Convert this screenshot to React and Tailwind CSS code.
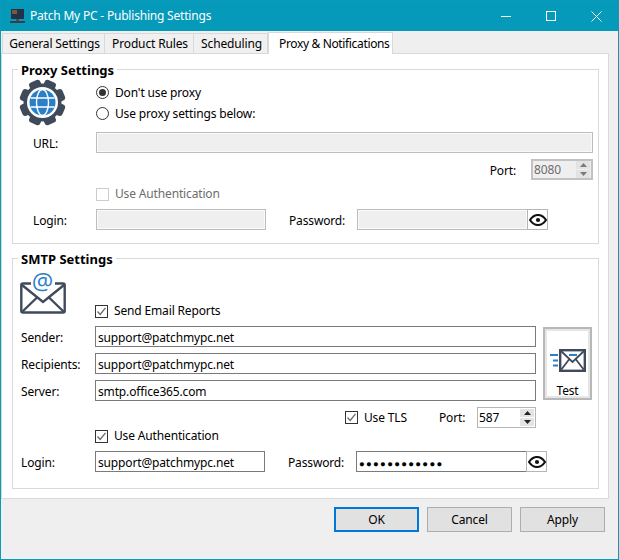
import React from "react";

const FONT = "font-['Open_Sans','Noto_Sans',sans-serif]";

function Radio({ checked }) {
  return (
    <span className="flex h-[13px] w-[13px] shrink-0 items-center justify-center rounded-full border border-[#333333] bg-white">
      {checked && <span className="h-[7px] w-[7px] rounded-full bg-[#333333]" />}
    </span>
  );
}

function Check({ checked, disabled }) {
  return (
    <span className={`flex h-[13px] w-[13px] shrink-0 items-center justify-center border ${disabled ? "border-[#cccccc]" : "border-[#333333]"} bg-white`}>
      {checked && (
        <svg width="11" height="11" viewBox="0 0 11 11" fill="none">
          <path d="M1.5 5.5 L4.2 8.5 L9.5 1.8" stroke="#6a6a6a" strokeWidth="1.3" />
        </svg>
      )}
    </span>
  );
}

function Eye() {
  return (
    <svg width="18" height="12" viewBox="0 0 18 12" fill="none">
      <path d="M1 6 C4 1.5 6.5 1 9 1 C11.5 1 14 1.5 17 6 C14 10.5 11.5 11 9 11 C6.5 11 4 10.5 1 6 Z" stroke="#111111" strokeWidth="2.1" />
      <circle cx="9" cy="6" r="2.1" fill="#111111" />
    </svg>
  );
}

function Spin({ disabled }) {
  const c = disabled ? "#7a7a7a" : "#222222";
  return (
    <span className={`flex w-[14px] flex-col gap-px ${disabled ? "bg-[#efefef]" : "bg-white"}`}>
      {[0, 1].map((i) => (
        <span key={i} className="flex h-[8px] items-center justify-center bg-[#e3e3e3]">
          <svg width="7" height="4" viewBox="0 0 7 4">
            <path d={i === 0 ? "M3.5 0 L7 4 L0 4 Z" : "M0 0 L7 0 L3.5 4 Z"} fill={c} />
          </svg>
        </span>
      ))}
    </span>
  );
}

function Field({ value, disabled, className = "" }) {
  return (
    <div className={`flex h-[21px] items-center border pl-[2px] pt-[2px] ${disabled ? "border-[#bdbdbd] bg-[#efefef] shadow-[inset_0_0_0_1px_#fafafa]" : "border-[#7a7a7a] bg-white"} ${className}`}>
      <span className="whitespace-nowrap">{value}</span>
    </div>
  );
}

function Legend({ children }) {
  return (
    <div className="-mt-[8px] ml-[5px] h-[17px] w-fit bg-white px-[3px] text-[13px] font-bold leading-[17px] tracking-normal text-black">
      {children}
    </div>
  );
}

function Gear() {
  const teeth = [0, 45, 90, 135, 180, 225, 270, 315];
  return (
    <svg width="47" height="47" viewBox="0 0 47 47">
      {teeth.map((a) => (
        <rect key={a} x="17.5" y="0.5" width="12" height="10" rx="3" fill="#3f4a5b" transform={`rotate(${a + 22.5} 23.5 23.5)`} />
      ))}
      <circle cx="23.5" cy="23.5" r="19" fill="#3f4a5b" />
      <circle cx="23.5" cy="23.5" r="15.5" fill="#ffffff" />
      <circle cx="23.5" cy="23.5" r="13" fill="#2b7fc7" />
      <ellipse cx="23.5" cy="23.5" rx="6" ry="13" fill="none" stroke="#ffffff" strokeWidth="1.4" />
      <path d="M11.5 19 H35.5 M11.5 28 H35.5" stroke="#ffffff" strokeWidth="1.4" />
    </svg>
  );
}

function Mail() {
  return (
    <svg className="overflow-visible" width="46" height="41" viewBox="0 0 46 41" fill="none">
      <path d="M11 10.5 H3 Q1.3 10.5 1.3 12 V38 Q1.3 39.5 3 39.5 H43 Q44.7 39.5 44.7 38 V12 Q44.7 10.5 43 10.5 H35" stroke="#3f4a5b" strokeWidth="2.4" />
      <path d="M2 12 L23 29 L44 12 M2 39 L17 24.5 M44 39 L29 24.5" stroke="#3f4a5b" strokeWidth="2.4" />
      <text x="22.5" y="17" textAnchor="middle" fontSize="24" fontWeight="500" fill="#2b7fc7" fontFamily="'Open Sans',sans-serif">@</text>
    </svg>
  );
}

function SendMail() {
  return (
    <svg width="37" height="23" viewBox="0 0 37 23" fill="none">
      <rect x="11.2" y="1.2" width="24.6" height="20.6" stroke="#3f4a5b" strokeWidth="2.4" />
      <path d="M12 2 L23.5 13 L35 2 M12 21 L20 10.5 M35 21 L27 10.5" stroke="#3f4a5b" strokeWidth="1.8" />
      <path d="M1 6 H9 M4 11.5 H9 M4 16.5 H9" stroke="#2b7fc7" strokeWidth="2" />
      <path d="M20 6 H28" stroke="#2b7fc7" strokeWidth="2" />
    </svg>
  );
}

function Monitor() {
  return (
    <svg width="15" height="14" viewBox="0 0 15 14">
      <rect x="1" y="0" width="13" height="10" fill="#25304a" />
      <rect x="2" y="1" width="5" height="4" fill="#7a5a3a" />
      <rect x="6" y="10" width="3" height="2" fill="#44505f" />
      <rect x="0" y="12" width="15" height="2" fill="#3a3f47" />
    </svg>
  );
}

function Btn({ children, primary }) {
  return (
    <div className={`flex h-[25px] w-[85px] items-center justify-center bg-[#e1e1e1] ${primary ? "border-2 border-[#0078d7]" : "border border-[#adadad]"}`}>
      {children}
    </div>
  );
}

export default function App() {
  return (
    <div className={`${FONT} flex h-[560px] w-[619px] flex-col overflow-hidden border border-[#0a9abb] bg-[#efefef] text-[12px] tracking-[-0.15px] text-black`}>
      {/* Title bar */}
      <div className="flex h-[30px] shrink-0 items-center bg-[#0599ba] pl-[9px] text-white">
        <Monitor />
        <span className="ml-[5px] tracking-[-0.2px]">Patch My PC - Publishing Settings</span>
        <div className="ml-auto flex items-center">
          <span className="h-px w-[10px] bg-white" />
          <span className="ml-[35px] h-[10px] w-[10px] border border-white" />
          <svg className="ml-[35px] mr-[16px]" width="11" height="11" viewBox="0 0 11 11">
            <path d="M0.5 0.5 L10.5 10.5 M10.5 0.5 L0.5 10.5" stroke="#ffffff" strokeWidth="1" />
          </svg>
        </div>
      </div>

      {/* Tabs */}
      <div className="flex h-[22px] shrink-0 items-end whitespace-nowrap pl-[1px]">
        <div className="flex h-[20px] w-[103px] items-center justify-center border border-b-0 border-[#d9d9d9] bg-[#f0f0f0] pl-[2px]">General Settings</div>
        <div className="-ml-px flex h-[20px] w-[90px] items-center justify-center border border-b-0 border-[#d9d9d9] bg-[#f0f0f0] pl-[2px]">Product Rules</div>
        <div className="-ml-px flex h-[20px] w-[75px] items-center justify-center border border-b-0 border-[#d9d9d9] bg-[#f0f0f0] pl-[2px]">Scheduling</div>
        <div className="relative z-10 -mb-px flex h-[22px] w-[125px] items-center border border-b-0 border-[#d9d9d9] bg-white pl-[10px] tracking-[-0.35px]">Proxy &amp; Notifications</div>
      </div>

      {/* Panel */}
      <div className="h-[446px] w-[608px] shrink-0 border border-[#d9d9d9] bg-white pl-[10px] pt-[15px]">
        {/* Proxy group */}
        <div className="h-[175px] w-[587px] border border-[#d9d9d9]">
          <Legend>Proxy Settings</Legend>
          <div className="flex h-[53px] pl-[6px]">
            <div className="w-[77px]"><Gear /></div>
            <div className="mt-[3px] flex flex-col">
              <div className="flex h-[21px] items-center gap-[6px]"><Radio checked />Don&apos;t use proxy</div>
              <div className="flex h-[21px] items-center gap-[6px]"><Radio />Use proxy settings below:</div>
            </div>
          </div>
          <div className="flex items-center">
            <div className="w-[83px] pl-[20px] pt-[2px]">URL:</div>
            <Field disabled className="w-[497px]" />
          </div>
          <div className="mt-[6px] flex h-[21px] items-center justify-end pr-[5px]">
            <span className="mr-[15px] pt-[2px]">Port:</span>
            <div className="flex h-[21px] w-[62px] items-center justify-between border-2 border-[#c2c2c2] bg-[#efefef] pr-[1px] text-[#6d6d6d]">
              <span className="pl-[1px] pt-[1px]">8080</span>
              <Spin disabled />
            </div>
          </div>
          <div className="mt-[7px] flex h-[14px] items-center gap-[6px] pl-[83px] text-[#6d6d6d]"><Check disabled />Use Authentication</div>
          <div className="mt-[8px] flex items-center">
            <div className="w-[83px] pl-[20px] pt-[2px]">Login:</div>
            <Field disabled className="w-[170px]" />
            <div className="w-[91px] pl-[23px] pt-[2px]">Password:</div>
            <Field disabled className="w-[171px]" />
            <div className="-ml-px flex h-[21px] w-[21px] items-center justify-center border border-[#b5b5b5]"><Eye /></div>
          </div>
        </div>

        {/* SMTP group */}
        <div className="mt-[14px] h-[231px] w-[587px] border border-[#d9d9d9]">
          <Legend>SMTP Settings</Legend>
          <div className="flex h-[58px] pl-[7px]">
            <div className="mt-[5px] w-[75px] shrink-0"><Mail /></div>
            <div className="mt-[36px] flex h-[14px] items-center gap-[6px]"><Check checked />Send Email Reports</div>
          </div>
          <div className="flex">
            <div className="flex w-[523px] flex-col gap-[6px] pl-[8px]">
              {[["Sender:", "support@patchmypc.net"], ["Recipients:", "support@patchmypc.net"], ["Server:", "smtp.office365.com"]].map(([l, v]) => (
                <div key={l} className="flex items-center">
                  <div className="w-[74px] pt-[2px]">{l}</div>
                  <Field value={v} className="w-[441px]" />
                </div>
              ))}
            </div>
            <div className="ml-[7px] mt-[1px] flex h-[73px] w-[49px] flex-col items-center border-2 border-[#b8b8b8] bg-white shadow-[inset_0_0_0_2px_#e6e6e6]">
              <div className="mt-[20px]"><SendMail /></div>
              <div className="mt-[12px] leading-[14px]">Test</div>
            </div>
          </div>
          <div className="mt-[6px] flex h-[21px] items-center pl-[332px]">
            <Check checked />
            <span className="ml-[6px] w-[75px] pt-[1px]">Use TLS</span>
            <span className="w-[38px] pt-[1px]">Port:</span>
            <div className="flex h-[21px] w-[59px] items-center justify-between border border-[#b5b5b5] bg-white pr-[1px]">
              <span className="pl-[1px] pt-[1px]">587</span>
              <Spin />
            </div>
          </div>
          <div className="mt-[1px] flex h-[14px] items-center gap-[6px] pl-[82px]"><Check checked />Use Authentication</div>
          <div className="mt-[8px] flex items-center pl-[8px]">
            <div className="w-[74px] pt-[2px]">Login:</div>
            <Field value="support@patchmypc.net" className="w-[170px]" />
            <div className="w-[91px] pl-[23px] pt-[2px]">Password:</div>
            <Field className="w-[171px]" value={<span className="text-[9.5px] tracking-[1.3px] text-black">{"●●●●●●●●●●●●"}</span>} />
            <div className="-ml-px flex h-[21px] w-[21px] items-center justify-center border border-[#b5b5b5]"><Eye /></div>
          </div>
        </div>
      </div>

      {/* Footer */}
      <div className="mt-[8px] flex gap-[8px] pl-[333px]">
        <Btn primary>OK</Btn>
        <Btn>Cancel</Btn>
        <Btn>Apply</Btn>
      </div>
    </div>
  );
}
